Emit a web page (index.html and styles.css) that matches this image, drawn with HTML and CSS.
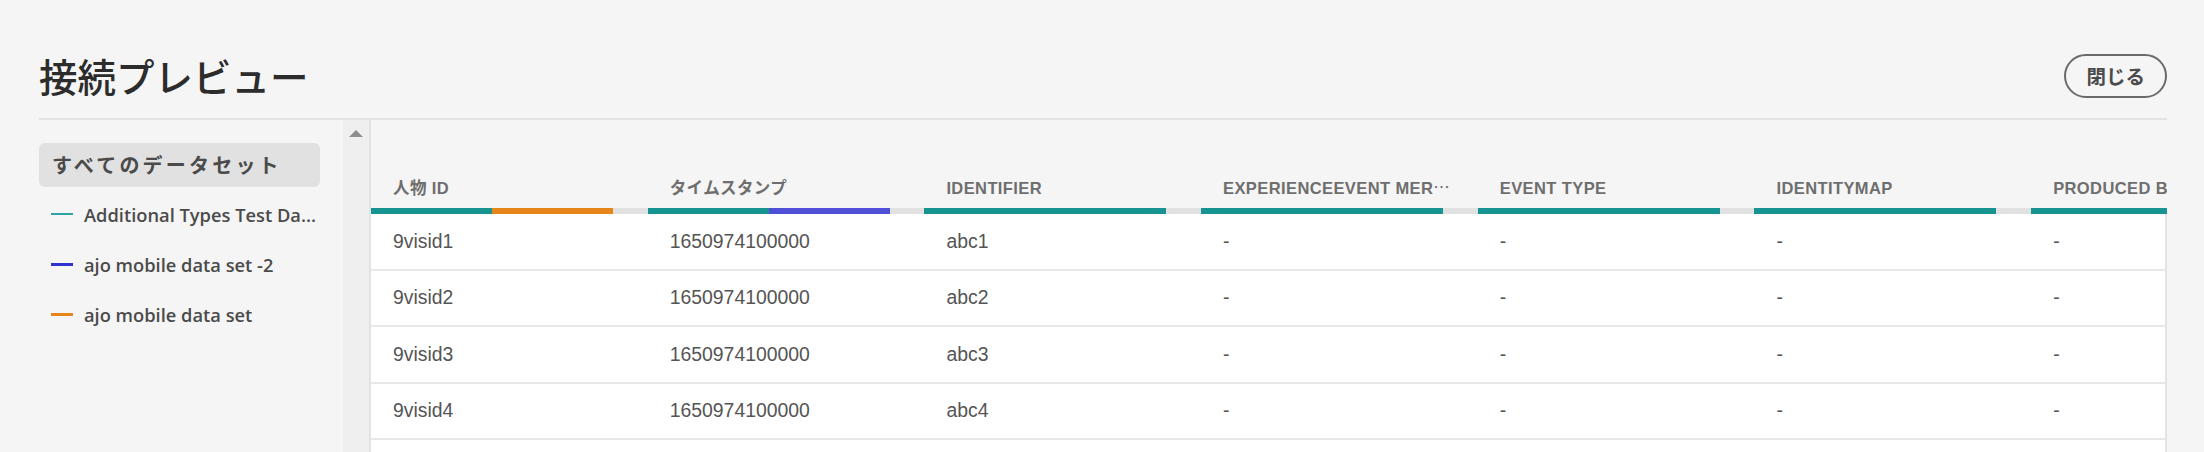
FILE: index.html
```html
<!DOCTYPE html>
<html lang="ja">
<head>
<meta charset="utf-8">
<title>接続プレビュー</title>
<link rel="stylesheet" href="styles.css">
</head>
<body>
<div class="page">
  <header class="header">
    <h1 class="title">接続プレビュー</h1>
    <button class="close-btn">閉じる</button>
  </header>
  <div class="content">
    <aside class="sidebar">
      <div class="ds-all">すべてのデータセット</div>
      <ul class="legend">
        <li class="legend-item"><span class="marker marker-teal"></span><span class="legend-label">Additional Types Test Da...</span></li>
        <li class="legend-item"><span class="marker marker-blue"></span><span class="legend-label">ajo mobile data set -2</span></li>
        <li class="legend-item"><span class="marker marker-orange"></span><span class="legend-label">ajo mobile data set</span></li>
      </ul>
    </aside>
    <div class="gutter"><span class="arrow-up"></span></div>
    <div class="table-wrap">
      <div class="thead">
        <div class="th"><span class="th-label">人物 ID</span><div class="bar"><span class="seg teal"></span><span class="seg orange"></span></div></div>
        <div class="th"><span class="th-label">タイムスタンプ</span><div class="bar"><span class="seg teal"></span><span class="seg blue"></span></div></div>
        <div class="th"><span class="th-label">IDENTIFIER</span><div class="bar"><span class="seg teal"></span></div></div>
        <div class="th"><span class="th-label">EXPERIENCEEVENT MER<span class="dots">…</span></span><div class="bar"><span class="seg teal"></span></div></div>
        <div class="th"><span class="th-label">EVENT TYPE</span><div class="bar"><span class="seg teal"></span></div></div>
        <div class="th"><span class="th-label">IDENTITYMAP</span><div class="bar"><span class="seg teal"></span></div></div>
        <div class="th"><span class="th-label">PRODUCED BY</span><div class="bar"><span class="seg teal"></span></div></div>
      </div>
      <div class="tbody">
        <div class="tr"><div class="td">9visid1</div><div class="td">1650974100000</div><div class="td">abc1</div><div class="td">-</div><div class="td">-</div><div class="td">-</div><div class="td">-</div></div>
        <div class="tr"><div class="td">9visid2</div><div class="td">1650974100000</div><div class="td">abc2</div><div class="td">-</div><div class="td">-</div><div class="td">-</div><div class="td">-</div></div>
        <div class="tr"><div class="td">9visid3</div><div class="td">1650974100000</div><div class="td">abc3</div><div class="td">-</div><div class="td">-</div><div class="td">-</div><div class="td">-</div></div>
        <div class="tr"><div class="td">9visid4</div><div class="td">1650974100000</div><div class="td">abc4</div><div class="td">-</div><div class="td">-</div><div class="td">-</div><div class="td">-</div></div>
        <div class="tr"><div class="td">9visid5</div><div class="td">1650974100000</div><div class="td">abc5</div><div class="td">-</div><div class="td">-</div><div class="td">-</div><div class="td">-</div></div>
      </div>
    </div>
  </div>
</div>
</body>
</html>
```
FILE: styles.css
```css
html, body {
  margin: 0;
  padding: 0;
  height: 452px;
  overflow: hidden;
  background: #f5f5f5;
}
body {
  font-family: "Liberation Sans", "Noto Sans CJK JP", sans-serif;
  color: #4b4b4b;
}
.page {
  width: 2204px;
  padding: 0 37px 0 39px;
  box-sizing: border-box;
}
.header {
  display: flex;
  align-items: center;
  justify-content: space-between;
  height: 120px;
  padding-top: 32px;
  box-sizing: border-box;
  border-bottom: 2px solid #e3e3e3;
}
.title {
  margin: 0;
  font-family: "Noto Sans CJK JP", sans-serif;
  font-size: 38.5px;
  font-weight: 500;
  line-height: 1;
  color: #2c2c2c;
}
.close-btn {
  height: 44px;
  padding: 0 20px;
  border: 2px solid #6a6a6a;
  border-radius: 22px;
  background: transparent;
  font-family: "Noto Sans CJK JP", sans-serif;
  font-size: 19.5px;
  font-weight: 700;
  color: #4b4b4b;
  line-height: 1;
  margin-top: 2px;
}
.content {
  display: flex;
  height: 332px;
}
.sidebar {
  width: 304px;
  flex: none;
  padding-top: 23px;
  box-sizing: border-box;
}
.ds-all {
  width: 281px;
  height: 44px;
  box-sizing: border-box;
  padding-left: 13px;
  border-radius: 6px;
  background: #e1e1e1;
  font-family: "Noto Sans CJK JP", sans-serif;
  font-size: 20px;
  font-weight: 700;
  letter-spacing: 3.2px;
  line-height: 44px;
  color: #4b4b4b;
}
.legend {
  list-style: none;
  margin: 2px 0 0;
  padding: 0 0 0 12px;
}
.legend-item {
  display: flex;
  align-items: center;
  height: 50px;
}
.marker {
  width: 22px;
  height: 2px;
  margin-right: 11px;
  flex: none;
}
.marker-teal { background: #2ea3a3; }
.marker-blue { background: #3232d0; height: 3px; }
.marker-orange { background: #e6861a; height: 3px; }
.legend-label {
  font-family: "Open Sans", "Noto Sans CJK JP", sans-serif;
  font-size: 18.3px;
  font-weight: 600;
  color: #4b4b4b;
  white-space: nowrap;
}
.gutter {
  width: 26px;
  flex: none;
  background: #efefef;
  display: flex;
  justify-content: center;
  padding-top: 10px;
  box-sizing: border-box;
}
.arrow-up {
  width: 0;
  height: 0;
  border-left: 7px solid transparent;
  border-right: 7px solid transparent;
  border-bottom: 7px solid #8e8e8e;
}
.table-wrap {
  flex: 1;
  min-width: 0;
  overflow: hidden;
  border-left: 2px solid #e3e3e3;
}
.thead {
  display: flex;
}
.th {
  width: 276.7px;
  flex: none;
  display: flex;
  flex-direction: column;
  justify-content: flex-end;
  height: 94px;
}
.th-label {
  padding: 0 0 8px 22px;
  font-size: 16.5px;
  font-weight: 700;
  line-height: 24px;
  letter-spacing: 0.4px;
  color: #6e6e6e;
  white-space: nowrap;
  overflow: hidden;
}
.dots {
  font-family: "Noto Sans CJK JP", sans-serif;
  font-weight: 400;
  letter-spacing: 0;
}
.bar {
  display: flex;
  height: 6px;
  background: #e1e1e1;
}
.seg {
  height: 6px;
}
.bar .seg:only-child {
  width: 242px;
}
.bar .seg:first-child:not(:only-child),
.bar .seg:last-child:not(:only-child) {
  width: 121px;
}
.teal { background: #179491; }
.orange { background: #e6861a; }
.blue { background: #5050d6; }
.tbody {
  background: #fff;
  border-right: 2px solid #e3e3e3;
}
.tr {
  display: flex;
  height: 56.5px;
  box-sizing: border-box;
  border-bottom: 2px solid #e8e8e8;
}
.td {
  width: 276.7px;
  flex: none;
  box-sizing: border-box;
  padding-left: 22px;
  display: flex;
  align-items: center;
  font-size: 19.4px;
  color: #555;
  white-space: nowrap;
}
```
